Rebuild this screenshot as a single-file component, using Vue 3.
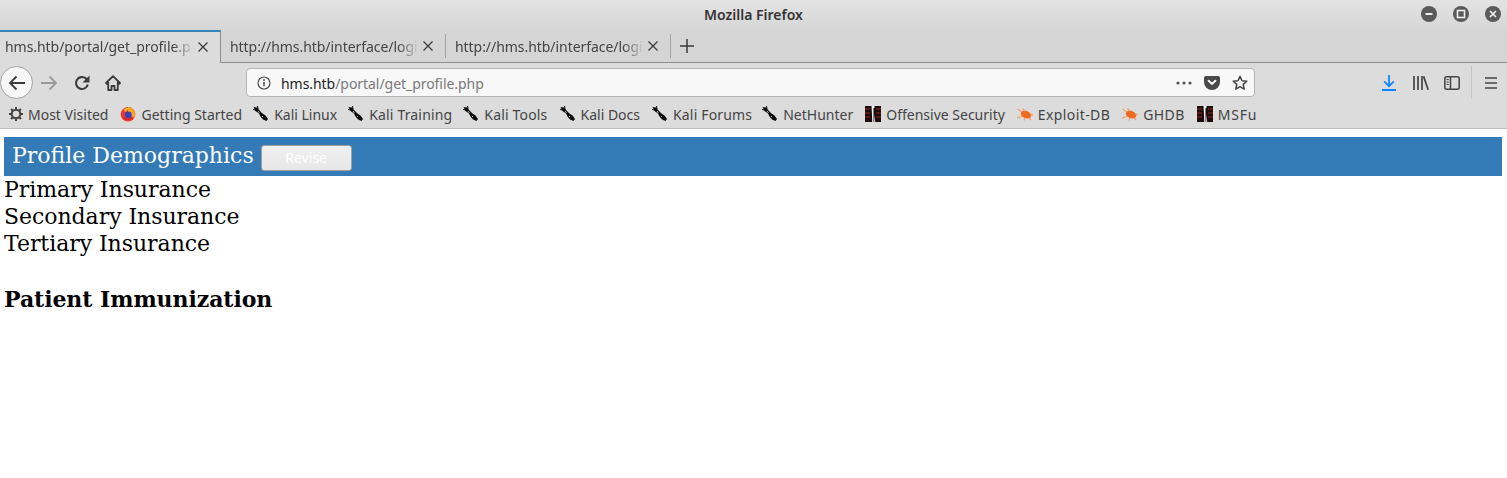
<script setup>
const tabs = [
  { label: 'hms.htb/portal/get_profile.p', active: true },
  { label: 'http://hms.htb/interface/logi', active: false },
  { label: 'http://hms.htb/interface/logi', active: false }
]
const bookmarks = [
  { label: 'Most Visited', icon: 'gear' },
  { label: 'Getting Started', icon: 'firefox' },
  { label: 'Kali Linux', icon: 'kali' },
  { label: 'Kali Training', icon: 'kali' },
  { label: 'Kali Tools', icon: 'kali' },
  { label: 'Kali Docs', icon: 'kali' },
  { label: 'Kali Forums', icon: 'kali' },
  { label: 'NetHunter', icon: 'kali' },
  { label: 'Offensive Security', icon: 'offsec' },
  { label: 'Exploit-DB', icon: 'bug' },
  { label: 'GHDB', icon: 'bug' },
  { label: 'MSFu', icon: 'offsec' }
]
</script>

<template>
  <div class="window">
    <header class="chrome">
      <div class="titlebar">
        <span class="title">Mozilla Firefox</span>
        <div class="win-btns">
          <span class="win-btn">
            <svg width="16" height="16" viewBox="0 0 16 16"><path d="M4.500 8h7" stroke="#eee" stroke-width="2" /></svg>
          </span>
          <span class="win-btn">
            <svg width="16" height="16" viewBox="0 0 16 16"><rect x="4.500" y="4.500" width="7" height="7" fill="none" stroke="#eee" stroke-width="1.6" /></svg>
          </span>
          <span class="win-btn">
            <svg width="16" height="16" viewBox="0 0 16 16"><path d="M5 5l6 6M11 5l-6 6" stroke="#eee" stroke-width="1.7" /></svg>
          </span>
        </div>
      </div>

      <div class="tabstrip">
        <div v-for="(t, i) in tabs" :key="i" class="tab" :class="{ active: t.active }">
          <span class="tab-label">{{ t.label }}</span>
          <svg class="tab-close" width="12" height="12" viewBox="0 0 12 12"><path d="M1.500 1.500l9 9M10.500 1.500l-9 9" stroke="#3c3c3c" stroke-width="1.3" /></svg>
        </div>
        <div class="new-tab">
          <svg width="16" height="16" viewBox="0 0 16 16"><path d="M8 1v14M1 8h14" stroke="#3a3a3a" stroke-width="1.500" /></svg>
        </div>
      </div>

      <div class="toolbar">
        <div class="back">
          <svg width="18" height="16" viewBox="0 0 18 16"><path d="M17 8H2M8.500 1.500L2 8l6.500 6.500" fill="none" stroke="#3b3b3b" stroke-width="1.8" /></svg>
        </div>
        <svg class="forward" width="18" height="16" viewBox="0 0 18 16"><path d="M1 8h15M9.500 1.500L16 8l-6.500 6.500" fill="none" stroke="#9a9a9a" stroke-width="1.8" /></svg>
        <svg class="reload" width="16" height="16" viewBox="0 0 16 16"><path d="M13.800 9.500A6 6 0 1 1 11.800 3.400L14 5.400" fill="none" stroke="#3b3b3b" stroke-width="2.100" /><path d="M15.500 0.500v7h-7z" fill="#3b3b3b" /></svg>
        <svg class="home" width="16" height="16" viewBox="0 0 16 16"><path d="M8 1.200L1 8l.8.8L3.200 7.500V15h3.300v-4h3v4h3.300V7.500L14.200 8.800 15 8z" fill="none" stroke="#3b3b3b" stroke-width="1.800" stroke-linejoin="round" /></svg>

        <div class="urlbar">
          <svg class="info" width="14" height="14" viewBox="0 0 14 14"><circle cx="7" cy="7" r="6" fill="none" stroke="#444" stroke-width="1.1" /><path d="M7 6v4.200" stroke="#444" stroke-width="1.4" /><circle cx="7" cy="4" r="0.9" fill="#444" /></svg>
          <span class="url"><b>hms.htb</b>/portal/get_profile.php</span>
          <svg class="dots" width="16" height="4" viewBox="0 0 16 4"><circle cx="2" cy="2" r="1.6" /><circle cx="8" cy="2" r="1.6" /><circle cx="14" cy="2" r="1.6" /></svg>
          <svg class="pocket" width="16" height="14" viewBox="0 0 16 14"><path d="M2 0h12a2 2 0 0 1 2 2v4a8 8 0 0 1-16 0V2a2 2 0 0 1 2-2z" fill="#4a4a4a" /><path d="M4.600 4.800L8 8l3.400-3.200" fill="none" stroke="#f7f7f7" stroke-width="2" stroke-linecap="round" /></svg>
          <svg class="star" width="16" height="16" viewBox="0 0 16 16"><path d="M8 1.300l2 4.400 4.800.5-3.600 3.200 1 4.700L8 11.700l-4.200 2.400 1-4.700L1.200 6.200 6 5.700z" fill="none" stroke="#444" stroke-width="1.500" stroke-linejoin="round" /></svg>
        </div>

        <svg class="tool-download" width="14" height="16" viewBox="0 0 14 16"><path d="M7 0v11M2.200 6.400L7 11.200l4.800-4.800" fill="none" stroke="#0a84ff" stroke-width="1.7" /><path d="M0 15h14" stroke="#0a84ff" stroke-width="2" /></svg>
        <svg class="tool-library" width="16" height="14" viewBox="0 0 16 14"><path d="M1 0v14M5 0v14M9 0v14M10.600.4l4.600 13.400" fill="none" stroke="#444" stroke-width="1.7" /></svg>
        <svg class="tool-sidebar" width="16" height="14" viewBox="0 0 16 14"><rect x="0.8" y="0.8" width="14.400" height="12.400" rx="2" fill="none" stroke="#444" stroke-width="1.500" /><path d="M6.500 1v12" stroke="#444" stroke-width="1.500" /><path d="M2.400 3.600h2.400M2.400 6h2.400M2.400 8.400h2.400" stroke="#444" stroke-width="1" /></svg>
        <span class="tool-sep"></span>
        <svg class="menu" width="12" height="12" viewBox="0 0 12 12"><path d="M0 1h12M0 6h12M0 11h12" stroke="#444" stroke-width="1.6" /></svg>
      </div>

      <div class="bookmarks">
        <div v-for="b in bookmarks" :key="b.label" class="bookmark">
          <svg v-if="b.icon === 'gear'" width="16" height="16" viewBox="0 0 16 16">
            <circle cx="8" cy="8" r="4.300" fill="none" stroke="#444" stroke-width="2" />
            <path d="M8 1v3M8 12v3M1 8h3M12 8h3M3 3l2.200 2.200M10.800 10.800L13 13M13 3l-2.200 2.200M5.200 10.800L3 13" stroke="#444" stroke-width="2" />
          </svg>
          <svg v-else-if="b.icon === 'firefox'" width="16" height="16" viewBox="0 0 16 16">
            <circle cx="8" cy="8.300" r="7.300" fill="#e8392f" />
            <path d="M8 1c4 .3 7 3.400 7 7.300 0 1.200-.4 2.500-1 3.500L8 8z" fill="#ffa51f" />
            <circle cx="8.300" cy="8.800" r="3.400" fill="#3a3fb5" />
            <path d="M3.500 4C5 2 8 1.500 10 2.500 8 3 6.500 4.500 6 6z" fill="#ffbd2e" />
            <path d="M1.500 10c1.500 3.500 6 5 9 3.500 1.500-.7 2.500-2 3-3-2 2-6 3-8 1.500z" fill="#d8211f" />
          </svg>
          <svg v-else-if="b.icon === 'kali'" width="16" height="16" viewBox="0 0 16 16">
            <path d="M0.500 1L4 1.500l3 3.500 2.500 2.500 3 2 2.500 3.500-1.500 2-3.500-1.500-2.500-3-1.500-3L2.500 5z" fill="#0b0b0b" />
            <path d="M0 3.500l3 .5M4.500 0l.5 3" stroke="#0b0b0b" stroke-width="1" />
            <path d="M5 5l1.500 2M9 10l1 1" stroke="#ddd" stroke-width="0.8" />
          </svg>
          <svg v-else-if="b.icon === 'offsec'" width="16" height="16" viewBox="0 0 16 16">
            <rect width="16" height="16" fill="#1c0c0c" />
            <path d="M0 3h5M11 3h5M0 7h5M11 7h5M0 11h5M11 11h5" stroke="#6b1f1f" stroke-width="1.500" />
            <path d="M6.500 0h3v2h-1v14h-1.300l-.200-7z" fill="#f0f0f0" />
            <path d="M9.500 8l.7 8h-1z" fill="#f0f0f0" />
          </svg>
          <svg v-else width="16" height="16" viewBox="0 0 16 16">
            <ellipse cx="9" cy="8.500" rx="5.500" ry="3.600" fill="#ee6a1f" transform="rotate(22 9 8.500)" />
            <path d="M5 6L0.500 3M5 10.500L0 12M8 5L5.500 2.500M8 12l-1 2.500M12 12l2 2M13 8l3 1" stroke="#f4a06c" stroke-width="1.200" />
          </svg>
          <span>{{ b.label }}</span>
        </div>
      </div>
    </header>

    <main class="page">
      <div class="banner">
        <span class="banner-title">Profile Demographics</span>
        <button class="revise">Revise</button>
      </div>
      <div class="insurance">Primary Insurance</div>
      <div class="insurance">Secondary Insurance</div>
      <div class="insurance">Tertiary Insurance</div>
      <h2 class="immunization">Patient Immunization</h2>
    </main>
  </div>
</template>

<style>
html, body { background: #fff; overflow: hidden; }
</style>

<style scoped>
.window {
  width: 1507px;
  height: 478px;
  overflow: hidden;
}
.chrome {
  font-family: "Noto Sans", sans-serif;
  color: #444;
}
.titlebar {
  height: 30px;
  display: flex;
  align-items: center;
  justify-content: center;
  position: relative;
  background: linear-gradient(#e3e3e3, #d6d6d6);
}
.title {
  font-size: 14px;
  font-weight: 600;
  color: #333;
  margin-top: -2px;
}
.win-btns {
  position: absolute;
  right: 6px;
  top: 6px;
  display: flex;
  gap: 16px;
}
.win-btn {
  width: 16px;
  height: 16px;
  border-radius: 50%;
  background: #5a5a5a;
  display: flex;
}
.tabstrip {
  height: 33px;
  display: flex;
  background: #d5d5d5;
  border-bottom: 1px solid #8f8f8f;
  box-sizing: border-box;
}
.tab {
  width: 225px;
  height: 32px;
  box-sizing: border-box;
  padding: 0 11px 0 9px;
  display: flex;
  align-items: center;
  gap: 1px;
  font-size: 14px;
  letter-spacing: -0.05px;
  position: relative;
  border-right: 1px solid transparent;
}
.tab:not(.active)::after {
  content: "";
  position: absolute;
  right: -1px;
  top: 4px;
  bottom: 4px;
  width: 1px;
  background: #a5a5a5;
}
.tab.active {
  width: 221px;
  height: 33px;
  padding-left: 5px;
  padding-bottom: 2px;
  background: #dcdcdc;
  border-top: 2px solid #3583b8;
  border-right: 1px solid #8f8f8f;
  z-index: 1;
}
.tab-label {
  flex: 1;
  min-width: 0;
  white-space: nowrap;
  overflow: hidden;
  -webkit-mask-image: linear-gradient(to right, #000 88%, transparent 99%);
  mask-image: linear-gradient(to right, #000 88%, transparent 99%);
}
.tab-close { flex: none; }
.new-tab {
  width: 32px;
  display: flex;
  align-items: center;
  justify-content: center;
  height: 32px;
}
.toolbar {
  height: 37px;
  box-sizing: border-box;
  padding-top: 2px;
  background: #dcdcdc;
  display: flex;
  align-items: center;
}
.back {
  width: 31px;
  height: 31px;
  border: 1px solid #a2a2a2;
  border-radius: 50%;
  background: #f7f7f7;
  display: flex;
  align-items: center;
  justify-content: center;
}
.forward { margin-left: 7px; }
.reload { margin-left: 16px; }
.home { margin-left: 15px; }
.urlbar {
  width: 1009px;
  height: 29px;
  margin-left: 125px;
  box-sizing: border-box;
  background: #f8f8f8;
  border: 1px solid #b4b4b4;
  border-radius: 4px;
  display: flex;
  align-items: center;
  padding: 0 6px 0 10px;
}
.info { flex: none; }
.url {
  flex: 1;
  margin: 1px 0 0 10px;
  font-size: 14px;
  letter-spacing: -0.05px;
  color: #7a7a7a;
}
.url b {
  font-weight: 400;
  color: #1e1e1e;
}
.dots { fill: #555; margin-right: 12px; }
.pocket { margin-right: 12px; }
.tool-download { margin-left: 127px; }
.tool-library { margin-left: 17px; }
.tool-sidebar { margin-left: 15px; }
.tool-sep {
  width: 1px;
  height: 33px;
  background: #c3c3c3;
  margin-left: 11px;
}
.menu { margin-left: 13px; }
.bookmarks {
  height: 29px;
  box-sizing: border-box;
  background: #dcdcdc;
  border-bottom: 1px solid #bdbdbd;
  display: flex;
  align-items: center;
  padding-left: 8px;
  gap: 12px;
  font-size: 14px;
}
.bookmark {
  display: flex;
  align-items: center;
  gap: 5px;
  white-space: nowrap;
}
.bookmark:first-child { gap: 4px; }
/* the toolbar font runs a little different from the original, nudge items back */
.bookmark:nth-child(3), .bookmark:nth-child(4), .bookmark:nth-child(5) { margin-left: -1px; }
.bookmark:nth-child(8) { margin-left: -2px; }
.bookmark:nth-child(4), .bookmark:nth-child(5), .bookmark:nth-child(7) { letter-spacing: 0.17px; }
.bookmark:nth-child(10), .bookmark:nth-child(11) { letter-spacing: 0.4px; }
.bookmark:nth-child(12) { letter-spacing: 0.8px; }
.page {
  padding: 8px 5px 0 4px;
  font-family: "DejaVu Serif", serif;
  color: #000;
  font-size: 22px;
}
.banner {
  height: 39px;
  background: #337ab7;
  color: #fff;
  display: flex;
  align-items: center;
  padding-left: 8px;
}
.banner-title {
  font-size: 22px;
  margin-top: -2px;
}
.revise {
  width: 91px;
  height: 26px;
  margin-left: 7px;
  margin-top: 3px;
  background: linear-gradient(#f0f0f0, #e7e7e7);
  border: 1px solid #a0a0a0;
  border-radius: 3px;
  color: #fff;
  font-family: "Noto Sans", sans-serif;
  font-size: 14px;
  padding: 0 0 2px;
}
.insurance {
  line-height: 27px;
  letter-spacing: -0.05px;
}
.immunization {
  margin: 29px 0 0;
  font-size: 22px;
  line-height: 27px;
  font-weight: 700;
  letter-spacing: -0.07px;
}
</style>
